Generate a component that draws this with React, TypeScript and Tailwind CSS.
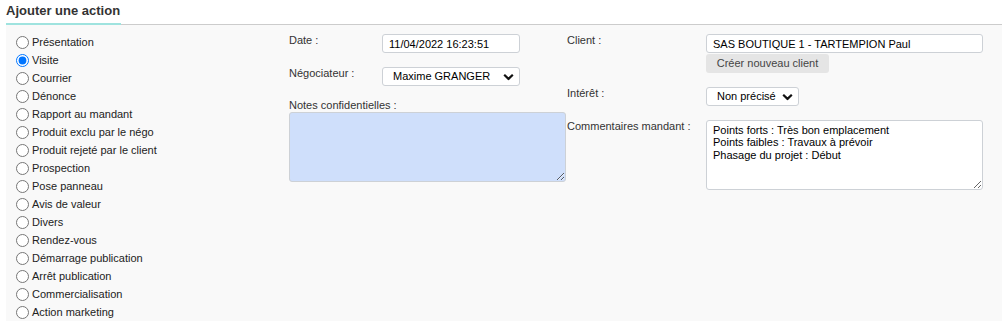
import { useState } from "react";

const ACTIONS = [
  "Présentation",
  "Visite",
  "Courrier",
  "Dénonce",
  "Rapport au mandant",
  "Produit exclu par le négo",
  "Produit rejeté par le client",
  "Prospection",
  "Pose panneau",
  "Avis de valeur",
  "Divers",
  "Rendez-vous",
  "Démarrage publication",
  "Arrêt publication",
  "Commercialisation",
  "Action marketing",
];

function Chevron() {
  return (
    <svg width="11" height="7" viewBox="0 0 11 7" className="pointer-events-none absolute right-[6px] top-1/2 -translate-y-1/2">
      <path d="M1.2 1.3 L5.5 5.4 L9.8 1.3" fill="none" stroke="#111" strokeWidth="2.2" />
    </svg>
  );
}

function Select({ value, options, className }: { value: string; options: string[]; className: string }) {
  return (
    <div className={`relative ${className}`}>
      <select
        defaultValue={value}
        className="w-full h-[19px] appearance-none rounded-[3px] border border-[#cdd1d6] bg-white pl-[10px] pr-[22px] text-[11px] leading-[17px] text-black outline-none"
      >
        {options.map((o) => (
          <option key={o}>{o}</option>
        ))}
      </select>
      <Chevron />
    </div>
  );
}

export default function App() {
  const [action, setAction] = useState("Visite");

  return (
    <div className="w-[1002px] h-[321px] overflow-hidden bg-white text-[11px] text-[#333] font-['Liberation_Sans',Arial,sans-serif]">
      {/* Titre */}
      <div className="ml-[6px] flex border-b border-[#cccccc]">
        <h2 className="-mb-px pt-[3px] pb-[5px] pr-[1px] border-b-2 border-[#9fe3df] text-[13px] leading-[15px] font-bold text-[#333]">
          Ajouter une action
        </h2>
      </div>

      <div className="ml-[6px] h-[296px] bg-[#f9f9f9] flex">
        {/* Types d'action */}
        <div className="w-[283px] pt-[8px] pl-[10px]">
          {ACTIONS.map((a) => (
            <label key={a} className="flex h-[18px] items-center gap-[3px] text-[#222]">
              <input
                type="radio"
                name="action"
                checked={action === a}
                onChange={() => setAction(a)}
                className="m-0 h-[13px] w-[13px]"
              />
              <span className="leading-[13px]">{a}</span>
            </label>
          ))}
        </div>

        {/* Colonne centrale */}
        <div className="w-[278px] pt-[9px]">
          <div className="flex">
            <span className="w-[93px] leading-[13px]">Date :</span>
            <input
              type="text"
              defaultValue="11/04/2022 16:23:51"
              className="w-[138px] h-[19px] rounded-[3px] border border-[#cdd1d6] bg-white px-[6px] text-[11px] text-black outline-none"
            />
          </div>
          <div className="mt-[14px] flex">
            <span className="w-[93px] leading-[13px]">Négociateur :</span>
            <Select value="Maxime GRANGER" options={["Maxime GRANGER"]} className="w-[138px]" />
          </div>
          <div className="mt-[13px] leading-[13px]">Notes confidentielles :</div>
          <textarea className="block w-[277px] h-[70px] rounded-[3px] border border-[#cdd1d6] bg-[#cfdffb] outline-none" />
        </div>

        {/* Colonne droite */}
        <div className="w-[416px] pt-[9px]">
          <div className="flex">
            <span className="w-[139px] leading-[13px]">Client :</span>
            <div className="flex flex-col">
              <input
                type="text"
                defaultValue="SAS BOUTIQUE 1 - TARTEMPION Paul"
                className="w-[277px] h-[19px] rounded-[3px] border border-[#cdd1d6] bg-white px-[6px] text-[11px] text-black outline-none"
              />
              <button className="mt-px w-[123px] h-[19px] rounded-[3px] bg-[#e5e5e5] text-[11px] text-[#444]">
                Créer nouveau client
              </button>
            </div>
          </div>
          <div className="mt-[14px] flex">
            <span className="w-[139px] leading-[13px]">Intérêt :</span>
            <Select value="Non précisé" options={["Non précisé", "Faible", "Moyen", "Fort"]} className="w-[93px]" />
          </div>
          <div className="mt-[14px] flex">
            <span className="w-[139px] leading-[13px]">Commentaires mandant :</span>
            <textarea
              defaultValue={"Points forts : Très bon emplacement\nPoints faibles : Travaux à prévoir\nPhasage du projet : Début"}
              className="block w-[277px] h-[70px] resize rounded-[3px] border border-[#cdd1d6] bg-white px-[6px] pt-[3px] text-[11px] leading-[12.4px] text-black outline-none"
            />
          </div>
        </div>
      </div>
    </div>
  );
}
